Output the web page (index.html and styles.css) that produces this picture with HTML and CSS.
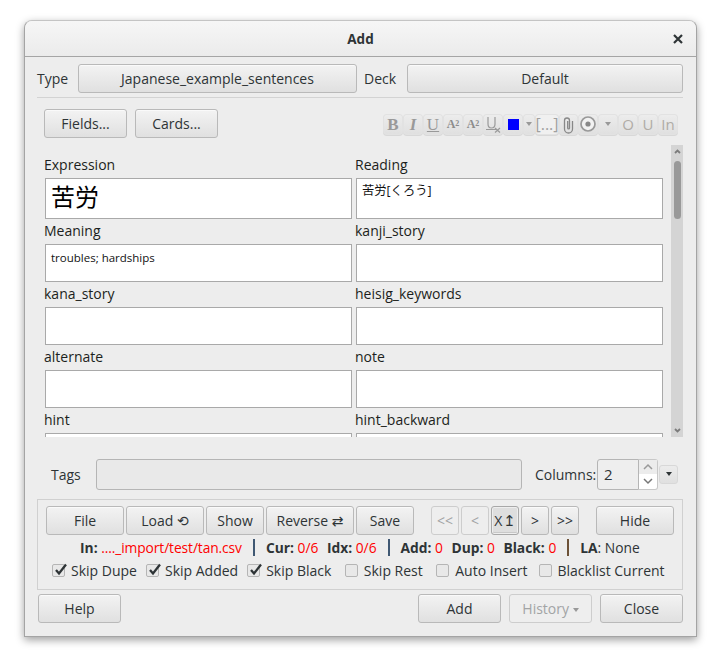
FILE: index.html
```html
<!DOCTYPE html>
<html lang="en">
<head>
<meta charset="utf-8">
<title>Add</title>
<link rel="stylesheet" href="styles.css">
</head>
<body>
<div class="window">
  <header class="titlebar">
    <span class="title">Add</span>
    <svg class="close-x" width="10" height="10" viewBox="0 0 10 10"><path d="M1 1 9 9M9 1 1 9" stroke="#2e3436" stroke-width="2.2"/></svg>
  </header>
  <div class="content">
    <div class="type-row">
      <span class="lbl type-lbl">Type</span>
      <button class="btn type-btn">Japanese_example_sentences</button>
      <span class="lbl deck-lbl">Deck</span>
      <button class="btn deck-btn">Default</button>
    </div>
    <div class="sep"></div>
    <div class="tool-row">
      <button class="btn w83">Fields...</button>
      <button class="btn w83">Cards...</button>
      <div class="toolbar">
        <span class="tb serif bold">B</span>
        <span class="tb serif ital">I</span>
        <span class="tb serif"><u>U</u></span>
        <span class="tb serif small">A<sup>2</sup></span>
        <span class="tb serif small">A<sub>2</sub></span>
        <span class="tb serif"><svg width="18" height="18" viewBox="0 0 18 18"><path d="M4 2v7c0 3 1.500 4 3.500 4s3.500-1 3.500-4V2M2 14.500h10" fill="none" stroke="#999" stroke-width="1.200"/><path d="M11 13l5 4.500M16 13l-5 4.500" stroke="#999" stroke-width="1.200"/></svg></span>
        <span class="tb"><i class="swatch"></i></span>
        <span class="tb narrow"><i class="caret"></i></span>
        <span class="tb cloze">[...]</span>
        <span class="tb clip"><svg width="17" height="19" viewBox="0 0 17 19"><path d="M12.500 6v8a4 4 0 0 1-8 0V5.500a2.500 2.500 0 0 1 5 0V13a.9.9 0 0 1-1.800 0V6" fill="none" stroke="#888" stroke-width="1.300"/></svg></span>
        <span class="tb"><svg width="18" height="18" viewBox="0 0 18 18"><circle cx="9" cy="9" r="7" fill="#f2f2f2" stroke="#999" stroke-width="1.700"/><circle cx="9" cy="9" r="2.600" fill="#888"/></svg></span>
        <span class="tb"><i class="caret"></i></span>
        <span class="tb sans">O</span>
        <span class="tb sans">U</span>
        <span class="tb sans">In</span>
      </div>
    </div>
    <div class="scroll">
      <div class="fields">
        <div class="field"><label>Expression</label><div class="box tall big">苦労</div></div>
        <div class="field"><label>Reading</label><div class="box tall reading">苦労[くろう]</div></div>
        <div class="field"><label>Meaning</label><div class="box">troubles; hardships</div></div>
        <div class="field"><label>kanji_story</label><div class="box"></div></div>
        <div class="field"><label>kana_story</label><div class="box"></div></div>
        <div class="field"><label>heisig_keywords</label><div class="box"></div></div>
        <div class="field"><label>alternate</label><div class="box"></div></div>
        <div class="field"><label>note</label><div class="box"></div></div>
        <div class="field"><label>hint</label><div class="box"></div></div>
        <div class="field"><label>hint_backward</label><div class="box"></div></div>
      </div>
      <div class="scrollbar">
        <svg width="13" height="14" viewBox="0 0 13 14"><path d="M4 8l2.500-2.500L9 8" fill="none" stroke="#7c7c7c" stroke-width="1.800"/></svg>
        <div class="thumb"></div>
        <svg class="sb-down" width="13" height="14" viewBox="0 0 13 14"><path d="M4 6l2.500 2.500L9 6" fill="none" stroke="#7c7c7c" stroke-width="1.800"/></svg>
      </div>
    </div>
    <div class="tags-row">
      <span class="lbl tags-lbl">Tags</span>
      <div class="tags-input"></div>
      <span class="lbl cols-lbl">Columns:</span>
      <div class="spin-input">2</div>
      <div class="spin-btns">
        <span class="spin-b"><svg width="12" height="8" viewBox="0 0 12 8"><path d="M2 6l4-4 4 4" fill="none" stroke="#999" stroke-width="1.500"/></svg></span>
        <span class="spin-b"><svg width="12" height="8" viewBox="0 0 12 8"><path d="M2 2l4 4 4-4" fill="none" stroke="#777" stroke-width="1.500"/></svg></span>
      </div>
      <span class="drop"><i class="caret dark"></i></span>
    </div>
    <section class="panel">
      <div class="panel-btns">
        <button class="btn w78">File</button>
        <button class="btn w78">Load <span class="sym">⟲</span></button>
        <button class="btn w58">Show</button>
        <button class="btn w88">Reverse <span class="sym">⇄</span></button>
        <button class="btn w58">Save</button>
        <div class="nav">
          <button class="btn w28 off">&lt;&lt;</button>
          <button class="btn w28 off">&lt;</button>
          <button class="btn w28 pressed">X<span class="sym up">↥</span></button>
          <button class="btn w28">&gt;</button>
          <button class="btn w28">&gt;&gt;</button>
        </div>
        <button class="btn w78 hide">Hide</button>
      </div>
      <div class="info">
        <b>In:</b>&nbsp;<span class="red file">...._import/test/tan.csv</span>
        <i class="pipe"></i>
        <b>Cur:</b>&nbsp;<span class="red">0/6</span>
        <b class="gap">Idx:</b>&nbsp;<span class="red">0/6</span>
        <i class="pipe"></i>
        <b>Add:</b>&nbsp;<span class="red">0</span>
        <b class="gap">Dup:</b>&nbsp;<span class="red">0</span>
        <b class="gap">Black:</b>&nbsp;<span class="red">0</span>
        <i class="pipe brown"></i>
        <b>LA</b>: None
      </div>
      <div class="checks">
        <span class="chk"><i class="cb"><svg width="15" height="14" viewBox="0 0 15 14"><path d="M3 7l3 3.500L13 1.500" fill="none" stroke="#2e3436" stroke-width="2.300"/></svg></i>Skip Dupe</span>
        <span class="chk"><i class="cb"><svg width="15" height="14" viewBox="0 0 15 14"><path d="M3 7l3 3.500L13 1.500" fill="none" stroke="#2e3436" stroke-width="2.300"/></svg></i>Skip Added</span>
        <span class="chk roomy"><i class="cb"><svg width="15" height="14" viewBox="0 0 15 14"><path d="M3 7l3 3.500L13 1.500" fill="none" stroke="#2e3436" stroke-width="2.300"/></svg></i>Skip Black</span>
        <span class="chk roomy"><i class="cb"></i>Skip Rest</span>
        <span class="chk mid"><i class="cb"></i>Auto Insert</span>
        <span class="chk"><i class="cb"></i>Blacklist Current</span>
      </div>
    </section>
    <div class="bottom">
      <button class="btn w83">Help</button>
      <button class="btn w83 push">Add</button>
      <button class="btn w83 off">History <i class="caret"></i></button>
      <button class="btn w83">Close</button>
    </div>
  </div>
</div>
</body>
</html>
```
FILE: styles.css
```css
* { box-sizing: border-box; }
html, body { margin: 0; padding: 0; background: #fff; }
body {
  width: 718px; height: 660px; overflow: hidden;
  padding: 20px 21px 0 24px;
  font-family: "Open Sans", "Noto Sans CJK JP", sans-serif;
  font-size: 14px; color: #2e3436;
}
.window {
  width: 673px; height: 617px;
  background: #ededed;
  border: 1px solid #a4a4a4;
  border-top-color: #c4c4c4;
  border-radius: 8px 8px 0 0;
  box-shadow: 0 3px 9px rgba(0,0,0,.38);
  display: flex; flex-direction: column;
}
.titlebar {
  height: 36px; flex: none;
  border-bottom: 1px solid #a5a5a5;
  border-radius: 7px 7px 0 0;
  background: linear-gradient(#f6f6f6, #ebebeb);
  display: flex; align-items: center; justify-content: center;
  position: relative;
}
.title { font-weight: 700; font-size: 13.500px; }
.close-x { position: absolute; right: 13px; top: 13px; }
.content { padding: 6px 13px 0 12px; flex: 1; display: flex; flex-direction: column; }
.btn {
  height: 29px; padding: 0;
  font: inherit; color: #2e3436;
  border: 1px solid #b9b9b9; border-radius: 3px;
  background: linear-gradient(#f3f3f3, #e0e0e0);
  box-shadow: inset 0 1px 0 rgba(255,255,255,.6);
  white-space: nowrap; flex: none;
}
.btn.off { background: #eeeeee; color: #a2a4a5; border-color: #cdcdcd; box-shadow: none; }
.btn.pressed { background: #dedede; border-color: #a8a8a8; box-shadow: inset 0 0 0 1px #eee, inset 0 -2px 0 #c8c8c8; }
.lbl { flex: none; }
.type-row { display: flex; align-items: center; height: 31px; padding-bottom: 1px; }
.type-lbl { width: 41px; }
.type-btn { width: 279px; }
.deck-lbl { margin-left: 7px; width: 43px; }
.deck-btn { width: 276px; }
.sep { height: 1px; background: #d3d3d3; margin-top: 3px; }
.tool-row { display: flex; align-items: center; gap: 8px; margin-top: 11px; padding-left: 7px; height: 29px; }
.w83 { width: 83px; }
.toolbar { margin-left: auto; margin-right: 6px; display: flex; gap: 2px; margin-top: 1px; }
.tb {
  width: 18px; height: 19px; flex: none;
  display: flex; align-items: center; justify-content: center;
  background: linear-gradient(#ececec, #e0e0e0);
  border-radius: 3px; box-shadow: 0 0 0 1px #e2e2e2, 0 1px 0 1px #d8d8d8;
  color: #999; font-size: 14px; line-height: 1;
}
.serif { font-family: "Liberation Serif", serif; font-size: 17px; }
.bold { font-weight: 700; font-size: 17px; }
.ital { font-style: italic; font-weight: 700; font-size: 17px; }
.small { font-size: 12px; font-weight: 700; color: #8c8c8c; }
.small sup, .small sub { font-size: 8px; line-height: 0; }
.sans { font-size: 15px; color: #b0aca6; }
.swatch { display: block; width: 11px; height: 11px; background: #0000ff; }
.narrow { width: 10px; }
.cloze { width: 22px; background: #f0f0f0; font-size: 16px; color: #a0a0a0; }
.clip { width: 17px; }
.caret { display: inline-block; border: 3px solid transparent; border-top: 4px solid #999; border-bottom: 0; vertical-align: 2px; }
.caret.dark { border-top-color: #2e3436; }
.scroll { display: flex; margin-top: 7px; height: 292px; overflow: hidden; }
.fields {
  width: 634px; flex: none; padding: 8px 0 0 8px;
  display: grid; grid-template-columns: 307px 307px; column-gap: 4px;
  align-content: start;
}
.field label { display: flex; align-items: center; height: 25px; padding-bottom: 2px; margin-left: -1px; color: #1c1f20; }
.box { height: 38px; background: #fff; border: 1px solid #a9a9a9; padding: 5px; font-size: 11.500px; line-height: 15px; color: #111; }
.box.tall { height: 41px; }
.box.big { font-size: 24px; line-height: 28px; padding: 4px 5px; color: #000; }
.box.reading { font-size: 12.300px; padding: 4px 5px; }
.scrollbar {
  width: 13px; height: 292px; flex: none;
  background: #d4d4d4; display: flex; flex-direction: column; align-items: center;
}
.scrollbar svg { flex: none; }
.thumb { width: 7px; height: 58px; margin-top: 2px; border-radius: 4px; background: #999; }
.sb-down { margin-top: auto; }
.tags-row { display: flex; align-items: center; height: 32px; margin-top: 21px; }
.tags-lbl { margin-left: 14px; width: 45px; }
.tags-input { width: 426px; height: 31px; background: #e9e9e9; border: 1px solid #b5b5b5; border-radius: 3px; }
.cols-lbl { margin-left: 13px; width: 62px; }
.spin-input { width: 42px; height: 31px; background: #eeeeee; border: 1px solid #b5b5b5; border-radius: 3px 0 0 3px; padding: 4px 6px; line-height: 21px; font-size: 15px; }
.spin-btns { width: 19px; height: 31px; display: flex; flex-direction: column; background: #fff; border: 1px solid #c8c8c8; border-left: 0; border-radius: 0 3px 3px 0; }
.spin-b { flex: 1; display: flex; align-items: center; justify-content: center; }
.spin-b:first-child { background: #ececec; }
.drop { width: 19px; height: 19px; margin-left: 1px; display: flex; align-items: center; justify-content: center; background: linear-gradient(#ececec, #e0e0e0); border: 1px solid #d8d8d8; border-radius: 3px; }
.drop .caret { vertical-align: 0; }
.panel {
  margin-top: 9px; height: 91px;
  border: 1px solid #d0d0d0; width: 646px;
  padding: 6px 8px 0 8px;
}
.panel-btns { display: flex; gap: 2px; }
.w78 { width: 78px; }
.w58 { width: 58px; }
.w88 { width: 88px; }
.w28 { width: 28px; }
.nav { display: flex; gap: 2px; margin-left: 15px; }
.hide { margin-left: 15px; }
.sym { font-family: "DejaVu Sans", sans-serif; font-size: 14px; }
.sym.up { font-size: 15px; margin-left: 1px; }
.info { height: 17px; margin-top: 4px; padding-left: 34px; display: flex; align-items: center; white-space: nowrap; font-size: 13.800px; }
.info b { font-weight: 700; }
.info .gap { margin-left: 8.500px; }
.red { color: #ff0000; }
.file { letter-spacing: -.1px; }
.pipe { width: 2px; height: 17px; margin: 0 11px; background: #3f5873; flex: none; }
.pipe.brown { background: #6d5238; }
.checks { display: flex; margin-top: 5px; padding-left: 6px; height: 18px; align-items: center; white-space: nowrap; }
.chk { display: flex; align-items: center; gap: 6px; margin-right: 9px; }
.chk.roomy { margin-right: 13.500px; }
.chk.mid { margin-right: 11px; }
.cb { display: block; width: 13px; height: 13px; border: 1px solid #b5b5b5; border-radius: 2px; background: #e8e8e8; flex: none; position: relative; }
.cb svg { position: absolute; left: 0; top: -2px; }
.bottom { display: flex; gap: 8px; margin-top: 4px; padding-left: 1px; }
.push { margin-left: auto; }
```
